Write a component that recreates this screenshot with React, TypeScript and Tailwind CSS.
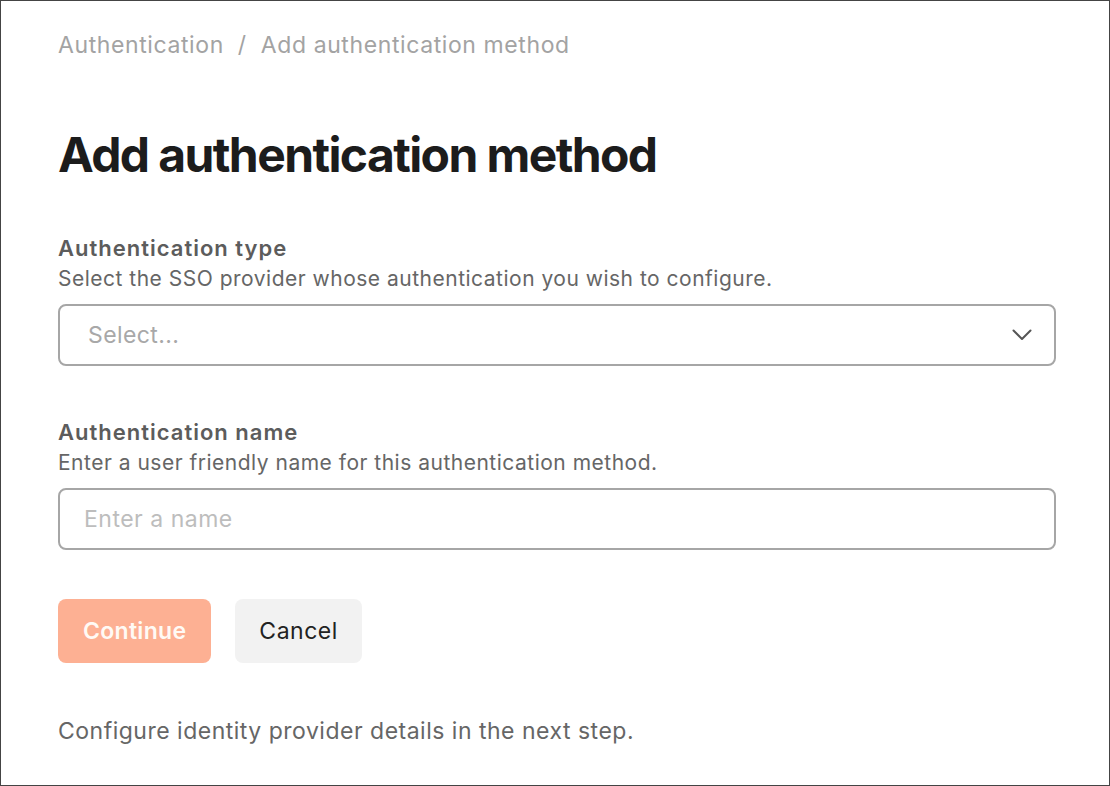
export default function App() {
  return (
    <div
      className="w-[1110px] h-[786px] bg-white border border-[#444444] text-[#222222] overflow-hidden"
      style={{ fontFamily: "Inter, 'Noto Sans', sans-serif" }}
    >
      <div className="pl-[57px] pr-[53px] pt-[28px]">
        {/* Breadcrumb */}
        <nav className="flex items-center text-[23px] leading-[32px] tracking-[0.6px] text-[#a3a3a3]">
          <span>Authentication</span>
          <span className="mx-[14px]">/</span>
          <span>Add authentication method</span>
        </nav>

        <h1 className="mt-[64px] text-[48px] leading-[60px] font-bold tracking-[-1.6px] text-[#1c1c1c]">
          Add authentication method
        </h1>

        {/* Authentication type */}
        <div className="mt-[47px]">
          <label className="block text-[22px] leading-[32px] font-semibold tracking-[1px] text-[#5c5c5c]">
            Authentication type
          </label>
          <p className="text-[21px] leading-[30px] tracking-[0.5px] text-[#666666]">
            Select the SSO provider whose authentication you wish to configure.
          </p>
          <button className="mt-[10px] w-full h-[62px] flex items-center justify-between rounded-[8px] border-2 border-[#a6a6a6] pl-[28px] pr-[22px] text-left">
            <span className="text-[23px] tracking-[0.4px] text-[#a8a8a8]">Select...</span>
            <svg width="20" height="12" viewBox="0 0 20 12" fill="none" className="text-[#555555]">
              <polyline points="1.5,1.5 10,10 18.5,1.5" stroke="currentColor" strokeWidth="2" strokeLinecap="round" strokeLinejoin="round" />
            </svg>
          </button>
        </div>

        {/* Authentication name */}
        <div className="mt-[50px]">
          <label className="block text-[22px] leading-[32px] font-semibold tracking-[1px] text-[#5c5c5c]">
            Authentication name
          </label>
          <p className="text-[21px] leading-[30px] tracking-[0.5px] text-[#666666]">
            Enter a user friendly name for this authentication method.
          </p>
          <input
            placeholder="Enter a name"
            className="mt-[10px] w-full h-[62px] rounded-[8px] border-2 border-[#a6a6a6] px-[24px] text-[23px] tracking-[0.5px] outline-none placeholder:text-[#bdbdbd]"
          />
        </div>

        {/* Actions */}
        <div className="mt-[49px] flex gap-[24px]">
          <button className="h-[64px] px-[25px] rounded-[8px] bg-[#fdb093] text-[#fffaf5] text-[23px] font-semibold tracking-[0.3px]">
            Continue
          </button>
          <button className="h-[64px] px-[24px] rounded-[8px] bg-[#f2f2f2] text-[#222222] text-[23px] tracking-[0.5px]">
            Cancel
          </button>
        </div>

        <p className="mt-[52px] text-[23px] leading-[32px] tracking-[0.5px] text-[#666666]">
          Configure identity provider details in the next step.
        </p>
      </div>
    </div>
  )
}
